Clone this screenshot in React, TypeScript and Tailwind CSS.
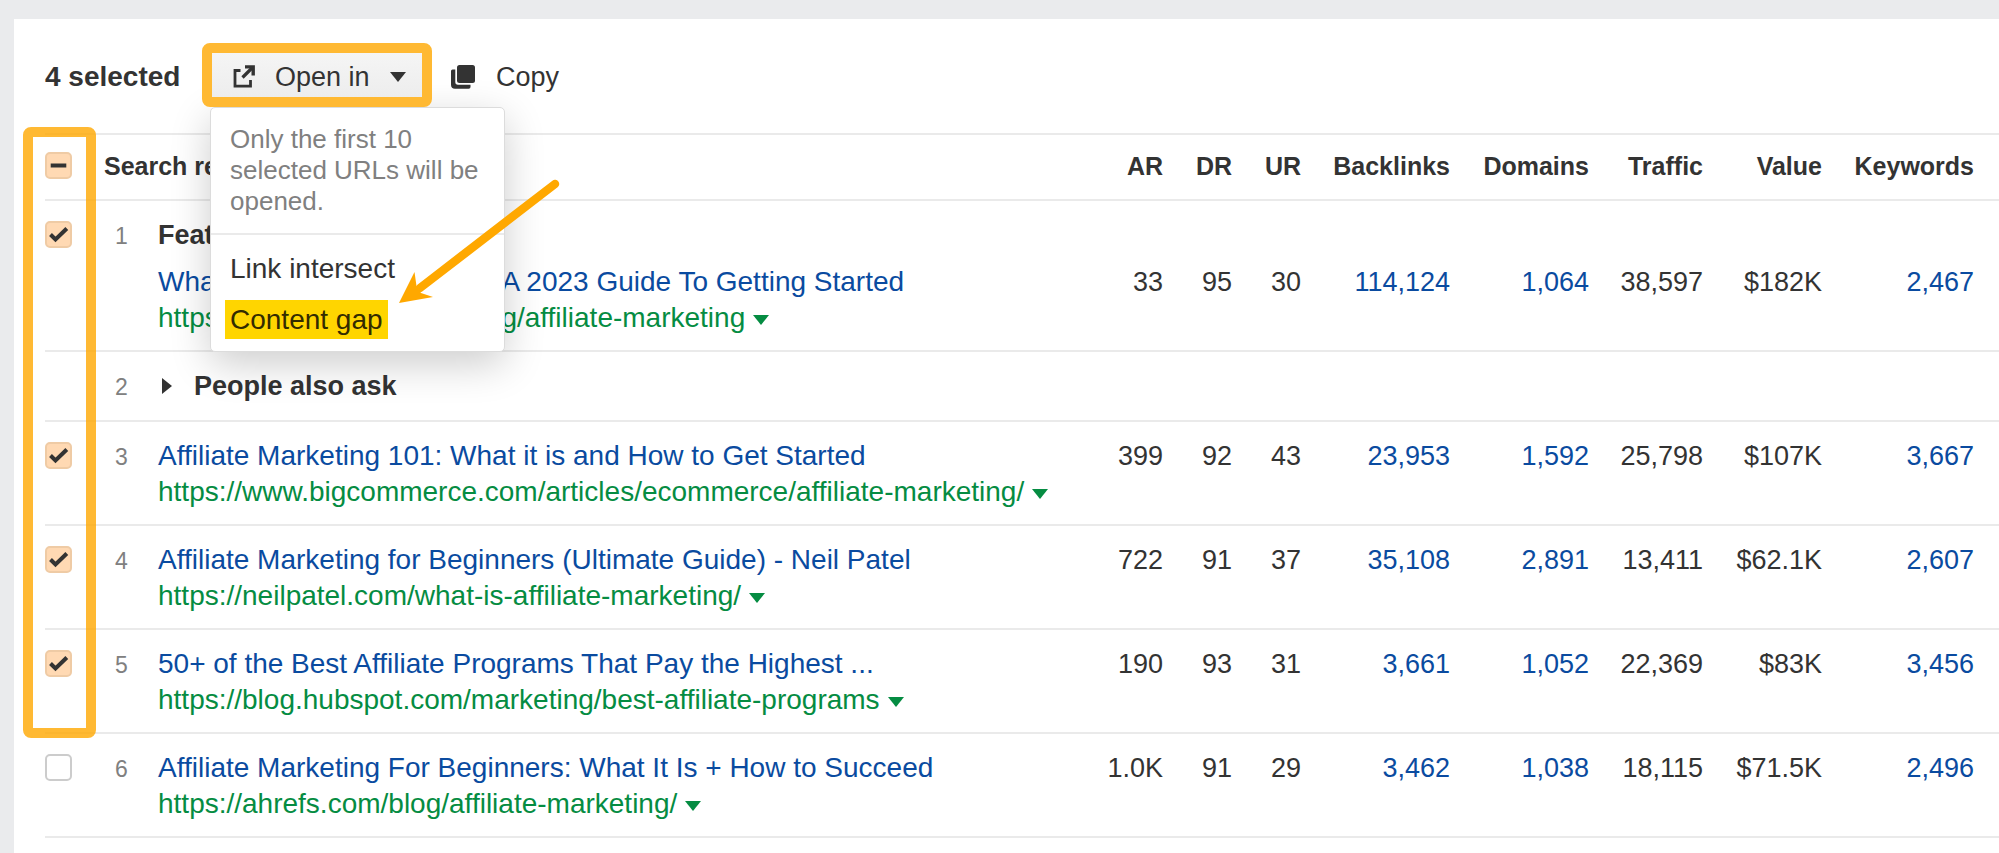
import React, { useState } from 'react';

type Row = {
  pos: number;
  feature?: string;
  title?: string;
  url?: string;
  stats?: string[];
};

const COLUMNS = [
  { label: 'AR', className: 'w-[90px]' },
  { label: 'DR', className: 'w-[69px]' },
  { label: 'UR', className: 'w-[69px]' },
  { label: 'Backlinks', className: 'w-[149px]', link: true },
  { label: 'Domains', className: 'w-[139px]', link: true },
  { label: 'Traffic', className: 'w-[114px]' },
  { label: 'Value', className: 'w-[119px]' },
  { label: 'Keywords', className: 'w-[177px] pr-[25px]', link: true },
];

const ROWS: Row[] = [
  {
    pos: 1,
    feature: 'Featured snippet',
    title: 'What is Affiliate Marketing? A 2023 Guide To Getting Started',
    url: 'https://www.shopify.com/blog/affiliate-marketing',
    stats: ['33', '95', '30', '114,124', '1,064', '38,597', '$182K', '2,467'],
  },
  { pos: 2, feature: 'People also ask' },
  {
    pos: 3,
    title: 'Affiliate Marketing 101: What it is and How to Get Started',
    url: 'https://www.bigcommerce.com/articles/ecommerce/affiliate-marketing/',
    stats: ['399', '92', '43', '23,953', '1,592', '25,798', '$107K', '3,667'],
  },
  {
    pos: 4,
    title: 'Affiliate Marketing for Beginners (Ultimate Guide) - Neil Patel',
    url: 'https://neilpatel.com/what-is-affiliate-marketing/',
    stats: ['722', '91', '37', '35,108', '2,891', '13,411', '$62.1K', '2,607'],
  },
  {
    pos: 5,
    title: '50+ of the Best Affiliate Programs That Pay the Highest ...',
    url: 'https://blog.hubspot.com/marketing/best-affiliate-programs',
    stats: ['190', '93', '31', '3,661', '1,052', '22,369', '$83K', '3,456'],
  },
  {
    pos: 6,
    title: 'Affiliate Marketing For Beginners: What It Is + How to Succeed',
    url: 'https://ahrefs.com/blog/affiliate-marketing/',
    stats: ['1.0K', '91', '29', '3,462', '1,038', '18,115', '$71.5K', '2,496'],
  },
];

const SELECTABLE = ROWS.filter(r => r.url).length;

function Caret({ className }: { className: string }) {
  return (
    <svg viewBox="0 0 16 10" className={className} fill="currentColor" aria-hidden="true">
      <path d="M0 0h16L8 10z" />
    </svg>
  );
}

function OpenIcon() {
  return (
    <svg viewBox="0 0 22 23" className="h-[23px] w-[22px]" fill="none" stroke="currentColor" strokeWidth="2.8" aria-hidden="true">
      <path d="M7.500 5.500H2v15.700h15.500V15" />
      <path d="M9.500 12.500L19.500 2.500" strokeWidth="3.200" />
      <path d="M12 1.900h8.200V10.500" strokeWidth="3.400" />
    </svg>
  );
}

function CopyIcon() {
  return (
    <svg viewBox="0 0 24 24" className="h-6 w-6" fill="currentColor" aria-hidden="true">
      <rect x="6" y="0" width="18" height="18" rx="2.500" />
      <path d="M0 6a1.500 1.500 0 0 1 1.500-1.500H4.300V17a2.700 2.700 0 0 0 2.700 2.700h12.500V22a1.800 1.800 0 0 1-1.800 1.800H4a4 4 0 0 1-4-4z" />
    </svg>
  );
}

function Checkbox({ label, checked, partial, onChange }: { label: string; checked: boolean; partial?: boolean; onChange: () => void }) {
  const filled = checked || partial;
  return (
    <label className="grid h-[27px] w-[27px] cursor-pointer">
      <input
        type="checkbox"
        aria-label={label}
        checked={checked}
        onChange={onChange}
        className={`col-start-1 row-start-1 h-[27px] w-[27px] appearance-none rounded-[5px] border-2 ${filled ? 'border-[#efcba5] bg-[#ffd9b3]' : 'border-[#cccccc] bg-white'}`}
      />
      {filled && (
        <svg viewBox="0 0 27 27" className="pointer-events-none col-start-1 row-start-1 h-[27px] w-[27px]" fill="none" stroke="#333333" strokeWidth="4" aria-hidden="true">
          {partial ? <path d="M5.700 13.500h15.600" /> : <path d="M5.500 13.500l5 5L21.800 7.500" />}
        </svg>
      )}
    </label>
  );
}

function OpenInMenu() {
  return (
    <div className="absolute top-full left-2 w-[295px] rounded-[5px] border border-[#dcdcdc] bg-white shadow-[0_12px_40px_rgba(0,0,0,0.2)]">
      <p className="border-b-2 border-[#eaeaea] px-[19px] py-4 text-[26px] leading-[31px] text-[#808080]">
        Only the first 10 selected URLs will be opened.
      </p>
      <ul className="px-[14px] pt-2 pb-[6px] text-[28px]">
        <li className="flex h-[51px] items-center">
          <button type="button" className="px-[5px] leading-[39px]">Link intersect</button>
        </li>
        <li className="flex h-[51px] items-center">
          <button type="button" className="bg-[#ffd500] px-[5px] leading-[39px] text-[#332b00]">Content gap</button>
        </li>
      </ul>
      {/* Pointer to the highlighted item */}
      <svg viewBox="0 0 170 134" className="pointer-events-none absolute top-[68px] left-[184px] h-[134px] w-[170px]" aria-hidden="true">
        <path d="M160 8L25 112" stroke="#ffa800" strokeWidth="8.500" strokeLinecap="round" />
        <path d="M4 127L19.500 96l2 14 4.500 7 12 4z" fill="#ffa800" />
      </svg>
    </div>
  );
}

export default function App() {
  const [selected, setSelected] = useState<number[]>([1, 3, 4, 5]);
  const allSelected = selected.length === SELECTABLE;

  const toggle = (pos: number) => {
    setSelected(selected.includes(pos) ? selected.filter(p => p !== pos) : [...selected, pos]);
  };
  const toggleAll = () => {
    setSelected(allSelected ? [] : ROWS.filter(r => r.url).map(r => r.pos));
  };

  return (
    <div className="min-h-screen bg-[#eaebed] pt-[19px] pl-[14px] font-['Liberation_Sans',Arial,sans-serif] text-[27px] leading-9 text-[#333333]">
      <main className="min-h-[834px] bg-white pl-[31px]">
        {/* Toolbar */}
        <div className="flex h-[114px] items-start pt-6">
          <div className="flex h-16 w-[157px] items-center pt-1 text-[28px] font-bold">{selected.length} selected</div>
          <div className="relative z-10">
            <OpenInMenu />
            <button type="button" className="relative flex h-16 w-[230px] items-center rounded-lg border-10 border-[#ffb933] bg-linear-to-b from-[#f5f5f5] to-[#ededed] pt-[3px] pl-[21px]">
              <OpenIcon />
              <span className="ml-5">Open in</span>
              <Caret className="ml-5 h-[10px] w-4" />
            </button>
          </div>
          <button type="button" className="ml-[19px] flex h-16 items-center gap-[21px] pt-[3px]">
            <CopyIcon />
            Copy
          </button>
        </div>

        <div className="relative">
          <table className="w-full table-fixed border-collapse">
            <thead>
              <tr className="h-[66px] border-y-2 border-[#eaeaea] text-[25px]">
                <th className="w-[59px] pb-1 text-left">
                  <Checkbox label="Select all" checked={allSelected} partial={selected.length > 0 && !allSelected} onChange={toggleAll} />
                </th>
                <th className="w-[54px] pb-[2px] text-left whitespace-nowrap">Search results</th>
                <th aria-hidden="true"></th>
                {COLUMNS.map(c => (
                  <th key={c.label} className={`pb-[2px] text-right ${c.className}`}>{c.label}</th>
                ))}
              </tr>
            </thead>
            <tbody>
              {ROWS.map(row => (
                <tr key={row.pos} className="border-b-2 border-[#eaeaea] align-top">
                  <td className="pt-5">
                    {row.url && <Checkbox label={`Select result ${row.pos}`} checked={selected.includes(row.pos)} onChange={() => toggle(row.pos)} />}
                  </td>
                  <td className="pt-[17px] pl-[11px] text-[23px] text-[#808080]">{row.pos}</td>
                  <td className={`pt-4 whitespace-nowrap ${row.url ? 'pb-[14px]' : 'pb-4'}`}>
                    {row.feature && (
                      <div className="flex items-center font-bold">
                        {!row.url && (
                          <svg viewBox="0 0 10 16" className="mr-[22px] ml-1 h-4 w-[10px]" fill="currentColor" aria-hidden="true">
                            <path d="M0 0l10 8-10 8z" />
                          </svg>
                        )}
                        {row.feature}
                      </div>
                    )}
                    {row.url && (
                      <div className={`text-[28px] ${row.feature ? 'mt-[11px]' : ''}`}>
                        <a href={row.url} className="block text-[#0a4ba0]">{row.title}</a>
                        <a href={row.url} className="flex items-center text-[#058c42]">
                          {row.url}
                          <Caret className="mt-1 ml-2 h-[10px] w-4" />
                        </a>
                      </div>
                    )}
                  </td>
                  {COLUMNS.map((c, i) => (
                    <td key={c.label} className={`text-right ${row.feature ? 'pt-[63px]' : 'pt-4'} ${!row.stats ? 'hidden' : ''} ${c.className}`}>
                      {row.stats && (c.link ? <a href="#" className="text-[#0a4ba0]">{row.stats[i]}</a> : row.stats[i])}
                    </td>
                  ))}
                </tr>
              ))}
            </tbody>
          </table>
          {/* Frame around the selection column */}
          <div className="pointer-events-none absolute top-[-6px] left-[-22px] h-[611px] w-[73px] rounded-lg border-10 border-[#ffa800]/80" />
        </div>
      </main>
    </div>
  );
}
